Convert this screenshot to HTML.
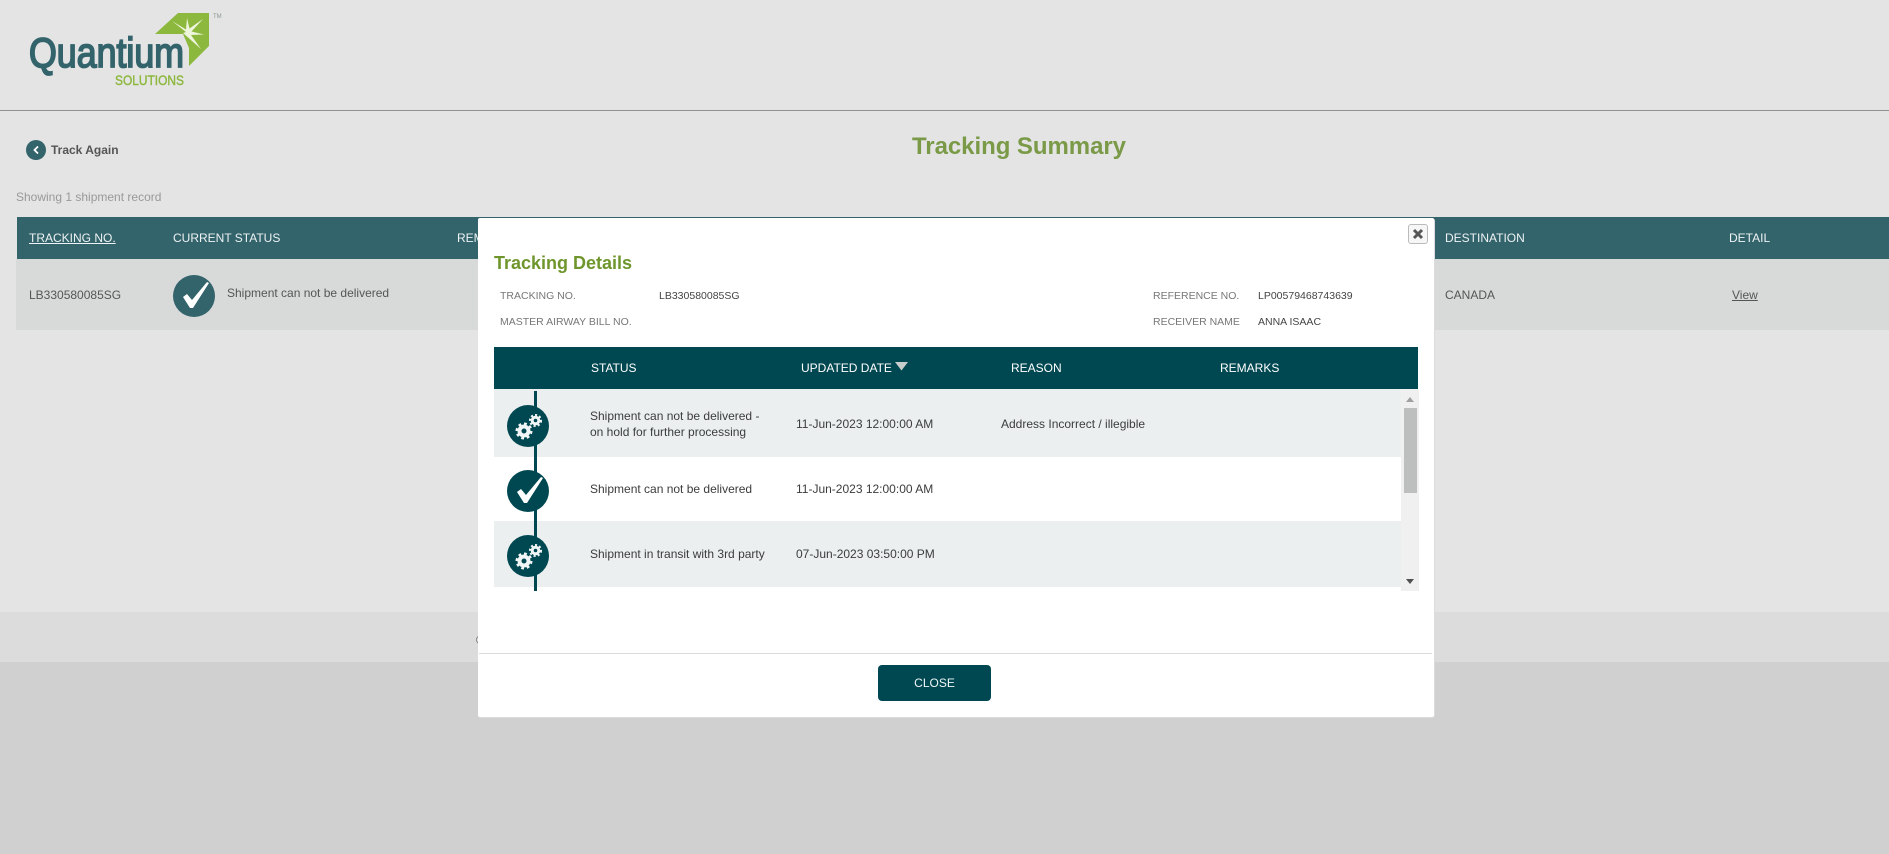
<!DOCTYPE html>
<html><head><meta charset="utf-8"><title>Tracking Summary</title>
<style>
html,body{margin:0;padding:0;width:1889px;height:854px;overflow:hidden;background:#d0d0d0;font-family:"Liberation Sans",sans-serif}
.a{position:absolute;white-space:nowrap;line-height:16px}
.b{position:absolute}
.h{color:#eef3f3;font-size:12px}
.m{color:#fff;font-size:12px}
.l{color:#777;font-size:10.5px}
.v{color:#444;font-size:10.5px}
.t{color:#3c3c3c;font-size:12px}
</style></head><body>
<div class="b" style="left:0;top:0;width:1889px;height:612px;background:#e4e4e4"></div>
<div class="b" style="left:0;top:612px;width:1889px;height:50px;background:#dcdcdc"></div>
<div class="b" style="left:0;top:110px;width:1889px;height:1px;background:#8f9191"></div>

<svg class="b" style="left:20px;top:5px" width="220" height="85" viewBox="20 5 220 85">
<polygon points="155,34 178,13 209,13 209,46 189,66 189,48 183,34" fill="#8db83e"/>
<path d="M172,21 186,29.500 187,18 189.500,28.500 203,19 191.500,31.500 204,34.500 191,35 201,49 187.500,37 183,33 186,32Z" fill="#eef5dd"/>
<text x="29" y="67" font-family="'Liberation Sans',sans-serif" font-size="42" fill="#33636b" stroke="#33636b" stroke-width="1.8" textLength="155" lengthAdjust="spacingAndGlyphs">Quantium</text>
<text x="115" y="85" font-family="'Liberation Sans',sans-serif" font-size="13.500" fill="#8db83e" stroke="#8db83e" stroke-width=".4" textLength="69" lengthAdjust="spacingAndGlyphs">SOLUTIONS</text>
<text x="213" y="18" font-family="'Liberation Sans',sans-serif" font-size="6" fill="#8a9a90">TM</text>
</svg>

<svg class="b" style="left:26px;top:140px" width="20" height="20"><circle cx="10" cy="10" r="10" fill="#33636b"/><path d="M12,6.500 8.500,10 12,13.500" stroke="#fff" stroke-width="1.800" fill="none"/></svg>
<div class="a" style="left:51px;top:142px;font-size:12px;font-weight:700;color:#555">Track Again</div>
<div class="a" style="left:912px;top:133px;font-size:24px;line-height:28px;font-weight:700;color:#7a9a48;letter-spacing:-.05px">Tracking Summary</div>
<div class="a" style="left:16px;top:189px;font-size:12px;color:#999">Showing 1 shipment record</div>

<div class="b" style="left:17px;top:217px;width:1872px;height:42px;background:#33636b"></div>
<div class="b" style="left:16px;top:259px;width:1873px;height:71px;background:#d8dada"></div>
<div class="a h" style="left:29px;top:230px;text-decoration:underline">TRACKING NO.</div>
<div class="a h" style="left:173px;top:230px">CURRENT STATUS</div>
<div class="a h" style="left:457px;top:230px">REMARKS</div>
<div class="a h" style="left:1445px;top:230px">DESTINATION</div>
<div class="a h" style="left:1729px;top:230px">DETAIL</div>
<div class="a" style="left:29px;top:287px;font-size:12px;color:#555">LB330580085SG</div>
<svg class="b" style="left:173px;top:275px" width="42" height="42"><circle cx="21" cy="21" r="21" fill="#33636b"/><path d="M10,22 14,19 19,25 34,7 36,8 20,33 17,33Z" fill="#fff"/></svg>
<div class="a" style="left:227px;top:285px;font-size:12px;color:#555">Shipment can not be delivered</div>
<div class="a" style="left:1445px;top:287px;font-size:12px;color:#555">CANADA</div>
<div class="a" style="left:1732px;top:287px;font-size:12px;color:#555;text-decoration:underline">View</div>
<div class="a" style="left:476px;top:632px;font-size:12px;color:#555">©</div>

<div class="b" style="left:478px;top:218px;width:957px;height:500px;background:#dcdcdc;border-radius:3px"></div>
<div class="b" style="left:478px;top:218px;width:956px;height:499px;background:#fff;border-radius:2px"></div>

<div class="b" style="left:1408px;top:224px;width:18px;height:18px;border:1px solid #bbb;border-radius:3px;background:#f6f6f6"></div>
<svg class="b" style="left:1412px;top:228px" width="12" height="12"><path d="M2,2 10,10M10,2 2,10" stroke="#555" stroke-width="3"/></svg>

<div class="a" style="left:494px;top:252px;font-size:18px;line-height:22px;font-weight:700;color:#6f962c">Tracking Details</div>
<div class="a l" style="left:500px;top:288px">TRACKING NO.</div>
<div class="a v" style="left:659px;top:288px">LB330580085SG</div>
<div class="a l" style="left:500px;top:314px">MASTER AIRWAY BILL NO.</div>
<div class="a l" style="left:1153px;top:288px">REFERENCE NO.</div>
<div class="a v" style="left:1258px;top:288px">LP00579468743639</div>
<div class="a l" style="left:1153px;top:314px">RECEIVER NAME</div>
<div class="a v" style="left:1258px;top:314px">ANNA ISAAC</div>

<div class="b" style="left:494px;top:347px;width:924px;height:42px;background:#004851"></div>
<div class="a m" style="left:591px;top:360px">STATUS</div>
<div class="a m" style="left:801px;top:360px">UPDATED DATE</div>
<svg class="b" style="left:895px;top:362px" width="14" height="9"><path d="M0,0H13L6.500,8.500Z" fill="#c9cccc"/></svg>
<div class="a m" style="left:1011px;top:360px">REASON</div>
<div class="a m" style="left:1220px;top:360px">REMARKS</div>

<div class="b" style="left:494px;top:389px;width:907px;height:68px;background:#ebefef"></div>
<div class="b" style="left:494px;top:521px;width:907px;height:66px;background:#ebefef"></div>
<div class="b" style="left:534px;top:391px;width:3px;height:200px;background:#004851"></div>

<div class="b" style="left:1401px;top:389px;width:18px;height:202px;background:#f0f0f0"></div>
<div class="b" style="left:1404px;top:408px;width:13px;height:85px;background:#bdbfbf"></div>
<svg class="b" style="left:1406px;top:397px" width="9" height="6"><path d="M0,5H8L4,0Z" fill="#a0a0a0"/></svg>
<svg class="b" style="left:1406px;top:579px" width="9" height="6"><path d="M0,0H8L4,5Z" fill="#505050"/></svg>

<svg class="b" style="left:507px;top:405px" width="42" height="42"><circle cx="21" cy="21" r="21" fill="#004851"/>
<circle cx="17" cy="26" r="4.500" fill="none" stroke="#f2f5f5" stroke-width="4"/><circle cx="17" cy="26" r="7" fill="none" stroke="#f2f5f5" stroke-width="3" pathLength="16" stroke-dasharray="1 1"/>
<circle cx="28.500" cy="15.500" r="3.300" fill="none" stroke="#f2f5f5" stroke-width="3"/><circle cx="28.500" cy="15.500" r="5.300" fill="none" stroke="#f2f5f5" stroke-width="2.500" pathLength="16" stroke-dasharray="1 1"/></svg>
<svg class="b" style="left:507px;top:470px" width="42" height="42"><circle cx="21" cy="21" r="21" fill="#004851"/><path d="M10,22 14,19 19,25 34,7 36,8 20,33 17,33Z" fill="#fff"/></svg>
<svg class="b" style="left:507px;top:535px" width="42" height="42"><circle cx="21" cy="21" r="21" fill="#004851"/>
<circle cx="17" cy="26" r="4.500" fill="none" stroke="#f2f5f5" stroke-width="4"/><circle cx="17" cy="26" r="7" fill="none" stroke="#f2f5f5" stroke-width="3" pathLength="16" stroke-dasharray="1 1"/>
<circle cx="28.500" cy="15.500" r="3.300" fill="none" stroke="#f2f5f5" stroke-width="3"/><circle cx="28.500" cy="15.500" r="5.300" fill="none" stroke="#f2f5f5" stroke-width="2.500" pathLength="16" stroke-dasharray="1 1"/></svg>

<div class="a t" style="left:590px;top:408px">Shipment can not be delivered -</div>
<div class="a t" style="left:590px;top:424px">on hold for further processing</div>
<div class="a t" style="left:796px;top:416px">11-Jun-2023 12:00:00 AM</div>
<div class="a t" style="left:1001px;top:416px">Address Incorrect / illegible</div>
<div class="a t" style="left:590px;top:481px">Shipment can not be delivered</div>
<div class="a t" style="left:796px;top:481px">11-Jun-2023 12:00:00 AM</div>
<div class="a t" style="left:590px;top:546px">Shipment in transit with 3rd party</div>
<div class="a t" style="left:796px;top:546px">07-Jun-2023 03:50:00 PM</div>

<div class="b" style="left:479px;top:653px;width:953px;height:1px;background:#d9dcdc"></div>
<div class="a" style="left:878px;top:665px;width:113px;height:36px;line-height:36px;text-align:center;background:#004851;border-radius:4px;color:#eef6f6;font-size:12px">CLOSE</div>
</body></html>
